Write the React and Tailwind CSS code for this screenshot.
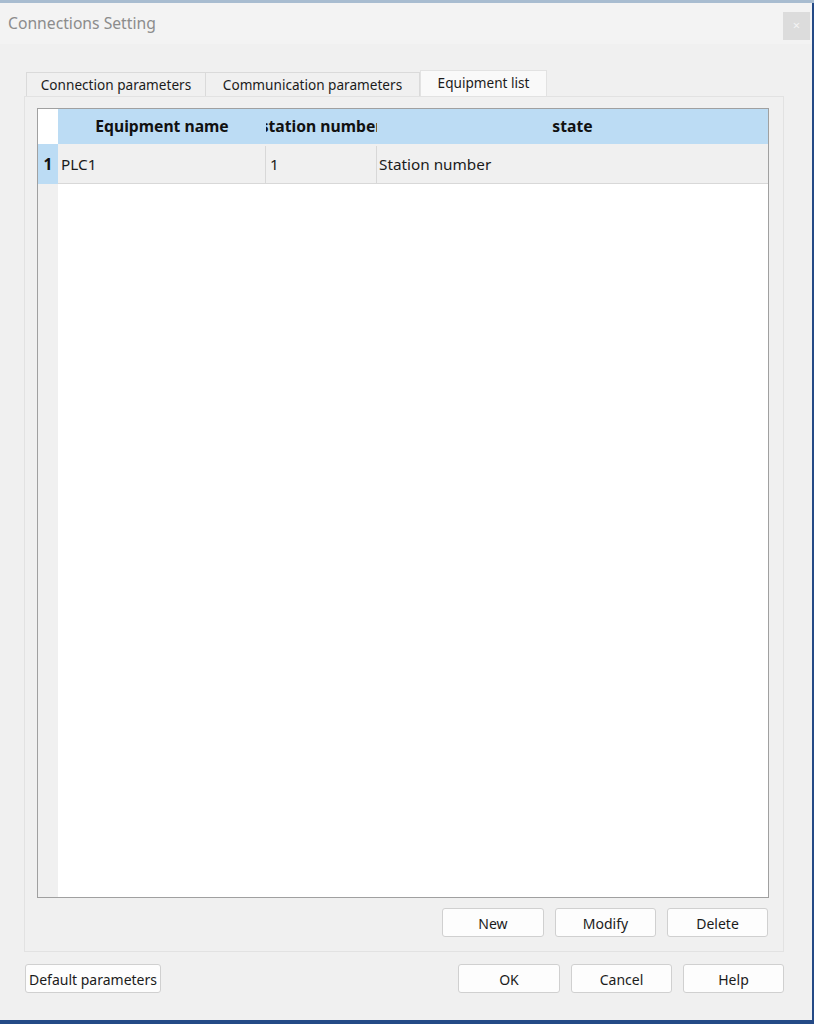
export default function App() {
  const font = { fontFamily: '"Noto Sans", "Open Sans", sans-serif' };
  const Btn = ({ children, className = "" }) => (
    <button className={"h-[29px] rounded-[3px] border border-[#d0d0d0] bg-[#fdfdfd] text-[14px] text-[#1b1b1b] pt-[1px] " + className}>
      {children}
    </button>
  );
  return (
    <div className="w-[814px] h-[1024px] bg-[#244a86] overflow-hidden" style={font}>
      <div className="h-[3px] bg-[#a8bcd0]" />
      <div className="w-[812px] h-[1017px] bg-[#f0f0f0] flex flex-col">
        {/* title bar */}
        <div className="h-[41px] bg-[#f3f3f3] flex items-center justify-between pl-[8px] pr-[2px]">
          <span className="text-[15.7px] text-[#8c8c8c] leading-none">Connections Setting</span>
          <div className="w-[27px] h-[28px] bg-[#dcdcdc] flex items-center justify-center text-[13px] text-[#f4f4f4] mt-[5px]">×</div>
        </div>
        {/* body */}
        <div className="flex flex-col pl-[24px] pt-[26px]">
          {/* tabs */}
          <div className="flex items-end h-[26px] pl-[2px]">
            <div className="h-[24px] w-[180px] border border-b-0 border-[#dadada] bg-[#f0f0f0] flex items-center justify-center text-[13.6px] text-[#1b1b1b] pt-[1px]">Connection parameters</div>
            <div className="h-[24px] w-[214px] border border-b-0 border-l-0 border-[#dadada] bg-[#f0f0f0] flex items-center justify-center text-[13.6px] text-[#1b1b1b] pt-[1px]">Communication parameters</div>
            <div className="h-[26px] w-[127px] border border-b-0 border-[#e2e2e2] bg-[#f9f9f9] flex items-center justify-center text-[13.6px] text-[#1b1b1b] pb-[1px]">Equipment list</div>
          </div>
          {/* panel */}
          <div className="w-[760px] h-[856px] border border-[#e2e2e2] bg-[#f0f0f0] pl-[12px] pt-[11px] flex flex-col">
            {/* table */}
            <div className="w-[732px] h-[790px] border border-[#a0a0a0] bg-white flex">
              {/* row header column */}
              <div className="w-[20px] flex flex-col bg-[#f0f0f0]">
                <div className="h-[35px] bg-white" />
                <div className="h-[40px] bg-[#bcdcf4] flex items-center justify-center text-[15.5px] font-bold text-[#111] pt-[2px]">1</div>
              </div>
              <div className="flex-1 flex flex-col">
                <div className="h-[35px] bg-[#bcdcf4] flex text-[15.7px] font-bold text-[#111]">
                  <div className="w-[208px] flex items-center justify-center whitespace-nowrap overflow-hidden pt-[1px]">Equipment name</div>
                  <div className="w-[111px] flex items-center justify-center whitespace-nowrap overflow-hidden pt-[1px]">station number</div>
                  <div className="flex-1 flex items-center justify-center whitespace-nowrap overflow-hidden pt-[1px]">state</div>
                </div>
                <div className="h-[40px] bg-[#f0f0f0] flex text-[15.3px] text-[#1b1b1b] border-b border-[#d8d8d8] pt-[2px]">
                  <div className="w-[208px] flex items-center pl-[3px] border-r border-[#d8d8d8]">PLC1</div>
                  <div className="w-[111px] flex items-center pl-[4px] border-r border-[#d8d8d8]">1</div>
                  <div className="flex-1 flex items-center pl-[2px]">Station number</div>
                </div>
              </div>
            </div>
            <div className="w-[732px] flex justify-end gap-[11px] mt-[10px] pr-[1px]">
              <Btn className="w-[102px]">New</Btn>
              <Btn className="w-[101px]">Modify</Btn>
              <Btn className="w-[101px]">Delete</Btn>
            </div>
          </div>
          {/* bottom buttons */}
          <div className="flex w-[760px] mt-[12px] pl-[1px]">
            <Btn className="w-[136px] text-[13.5px]">Default parameters</Btn>
            <div className="flex-1" />
            <div className="flex gap-[11px]">
              <Btn className="w-[102px]">OK</Btn>
              <Btn className="w-[101px]">Cancel</Btn>
              <Btn className="w-[101px]">Help</Btn>
            </div>
          </div>
        </div>
      </div>
    </div>
  );
}
